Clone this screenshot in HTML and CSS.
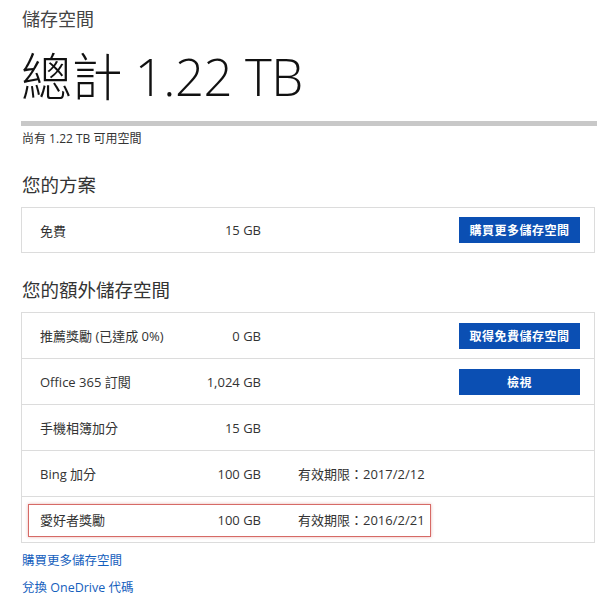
FILE: index.html
```html
<!DOCTYPE html>
<html lang="zh-Hant">
<head>
<meta charset="utf-8">
<title>儲存空間</title>
<link rel="stylesheet" href="styles.css">
</head>
<body>
<main class="page">
  <div class="crumb">儲存空間</div>
  <h1 class="total">總計 1.22 TB</h1>
  <div class="meter"></div>
  <div class="free">尚有 1.22 TB 可用空間</div>

  <h2 class="section">您的方案</h2>
  <div class="table">
    <div class="row">
      <span class="label">免費</span>
      <span class="value">15 GB</span>
      <span class="note"></span>
      <a class="btn">購買更多儲存空間</a>
    </div>
  </div>

  <h2 class="section section-2">您的額外儲存空間</h2>
  <div class="table">
    <div class="row">
      <span class="label">推薦獎勵 (已達成 0%)</span>
      <span class="value">0 GB</span>
      <span class="note"></span>
      <a class="btn">取得免費儲存空間</a>
    </div>
    <div class="row">
      <span class="label">Office 365 訂閱</span>
      <span class="value">1,024 GB</span>
      <span class="note"></span>
      <a class="btn">檢視</a>
    </div>
    <div class="row">
      <span class="label">手機相簿加分</span>
      <span class="value">15 GB</span>
      <span class="note"></span>
    </div>
    <div class="row">
      <span class="label">Bing 加分</span>
      <span class="value">100 GB</span>
      <span class="note">有效期限：2017/2/12</span>
    </div>
    <div class="row row-marked">
      <span class="label">愛好者獎勵</span>
      <span class="value">100 GB</span>
      <span class="note">有效期限：2016/2/21</span>
      <span class="highlight"></span>
    </div>
  </div>

  <a class="link">購買更多儲存空間</a>
  <a class="link">兌換 OneDrive 代碼</a>
</main>
</body>
</html>
```

FILE: styles.css
```css
* { box-sizing: border-box; }
html, body { margin: 0; background: #fff; }
body {
  font-family: "Open Sans", "Noto Sans CJK TC", sans-serif;
  color: #333;
}
.page {
  width: 610px;
  padding: 8px 13px 0 21px;
  display: flex;
  flex-direction: column;
}
.crumb {
  font-size: 18px;
  line-height: 22px;
  color: #444;
  padding-left: 1px;
}
.total {
  margin: 16px 0 0 0;
  font-size: 51px;
  line-height: 60px;
  font-weight: 300;
  color: #111;
  letter-spacing: -0.5px;
}
.meter {
  margin-top: 15px;
  height: 5px;
  width: 576px;
  background: #c8c8c8;
}
.free {
  margin-top: 5px;
  font-size: 12px;
  line-height: 16px;
  color: #333;
  padding-left: 1px;
}
.section {
  margin: 26px 0 0 0;
  font-size: 18.5px;
  line-height: 24px;
  font-weight: 400;
  color: #333;
  padding-left: 1px;
}
.section-2 { margin-top: 25px; }
.table {
  margin-top: 10px;
  width: 574px;
  border: 1px solid #dcdcdc;
  display: flex;
  flex-direction: column;
}
.row {
  position: relative;
  height: 45px;
  display: grid;
  grid-template-columns: 160px 61px 1fr auto;
  align-items: center;
  padding: 0 14px 0 18px;
  font-size: 13px;
  color: #333;
}
.row + .row {
  height: 46px;
  border-top: 1px solid #dcdcdc;
}
.table .row:only-child { height: 44px; }
.value { text-align: right; }
.note { padding-left: 37px; }
.btn {
  width: 121px;
  height: 26px;
  display: flex;
  align-items: center;
  justify-content: center;
  background: #0b4fb3;
  color: #fff;
  font-size: 12px;
  font-weight: 700;
  letter-spacing: 0.5px;
}
.highlight {
  position: absolute;
  left: 6px;
  top: 7px;
  width: 403px;
  height: 33px;
  border: 1.5px solid #d66a66;
  box-shadow: 0 0 3px rgba(214, 106, 102, 0.5);
}
.link {
  margin-top: 9px;
  font-size: 12.5px;
  line-height: 18px;
  color: #1560bd;
  padding-left: 1px;
}
```
